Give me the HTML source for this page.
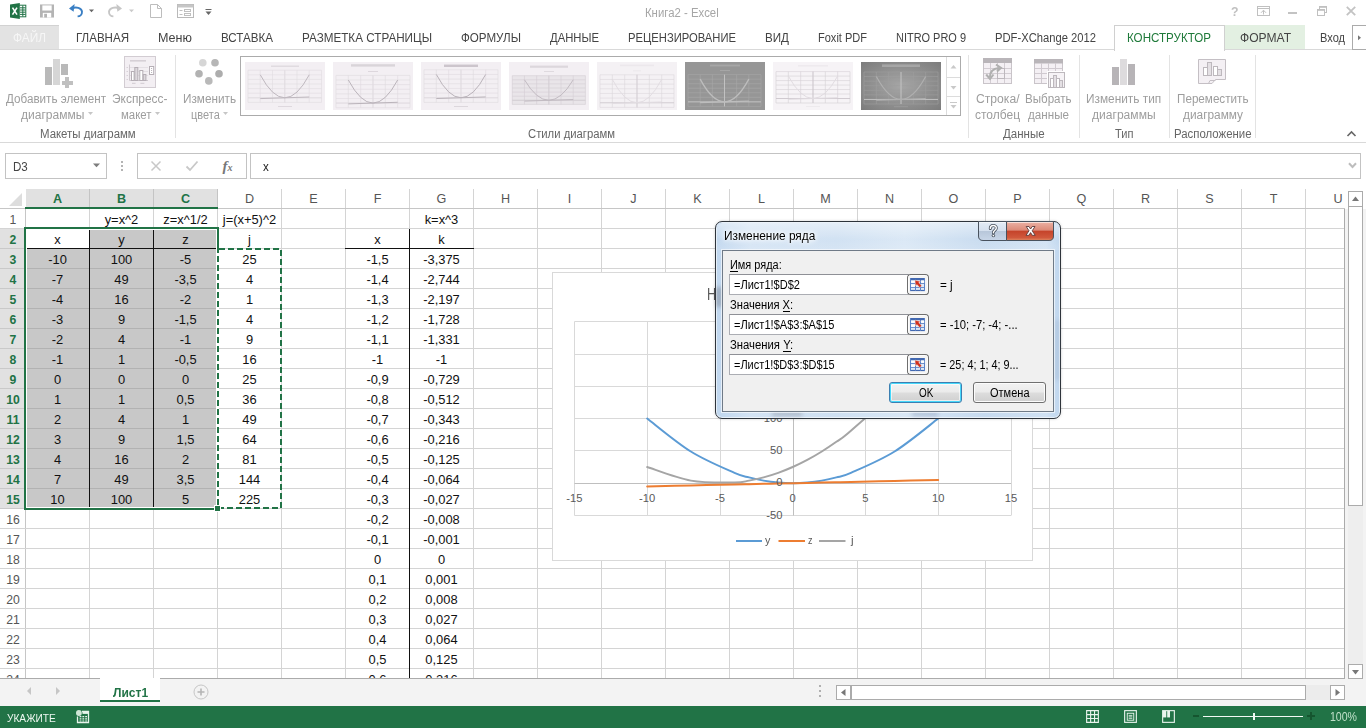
<!DOCTYPE html>
<html><head><meta charset="utf-8"><title>Excel</title>
<style>
html,body{margin:0;padding:0;}
body{width:1366px;height:728px;overflow:hidden;position:relative;background:#fff;font-family:"Liberation Sans",sans-serif;}
.t{position:absolute;white-space:nowrap;transform-origin:0 50%;}
.r{position:absolute;}
svg{position:absolute;overflow:visible;}
</style></head><body>
<div class="r" style="left:0px;top:188px;width:1366px;height:518px;background:#fff;"></div>
<div class="r" style="left:26px;top:189px;width:192px;height:19px;background:#e1e1e1;"></div>
<span class="t" style="left:52.95px;top:190.83px;font-size:12.60px;line-height:16px;color:#217346;font-weight:bold;">A</span>
<span class="t" style="left:116.95px;top:190.83px;font-size:12.60px;line-height:16px;color:#217346;font-weight:bold;">B</span>
<span class="t" style="left:180.95px;top:190.83px;font-size:12.60px;line-height:16px;color:#217346;font-weight:bold;">C</span>
<span class="t" style="left:244.95px;top:190.83px;font-size:12.60px;line-height:16px;color:#555;">D</span>
<span class="t" style="left:309.30px;top:190.83px;font-size:12.60px;line-height:16px;color:#555;">E</span>
<span class="t" style="left:373.65px;top:190.83px;font-size:12.60px;line-height:16px;color:#555;">F</span>
<span class="t" style="left:436.60px;top:190.83px;font-size:12.60px;line-height:16px;color:#555;">G</span>
<span class="t" style="left:500.95px;top:190.83px;font-size:12.60px;line-height:16px;color:#555;">H</span>
<span class="t" style="left:567.75px;top:190.83px;font-size:12.60px;line-height:16px;color:#555;">I</span>
<span class="t" style="left:630.35px;top:190.83px;font-size:12.60px;line-height:16px;color:#555;">J</span>
<span class="t" style="left:693.30px;top:190.83px;font-size:12.60px;line-height:16px;color:#555;">K</span>
<span class="t" style="left:758.00px;top:190.83px;font-size:12.60px;line-height:16px;color:#555;">L</span>
<span class="t" style="left:820.25px;top:190.83px;font-size:12.60px;line-height:16px;color:#555;">M</span>
<span class="t" style="left:884.95px;top:190.83px;font-size:12.60px;line-height:16px;color:#555;">N</span>
<span class="t" style="left:948.60px;top:190.83px;font-size:12.60px;line-height:16px;color:#555;">O</span>
<span class="t" style="left:1013.30px;top:190.83px;font-size:12.60px;line-height:16px;color:#555;">P</span>
<span class="t" style="left:1076.60px;top:190.83px;font-size:12.60px;line-height:16px;color:#555;">Q</span>
<span class="t" style="left:1140.95px;top:190.83px;font-size:12.60px;line-height:16px;color:#555;">R</span>
<span class="t" style="left:1205.30px;top:190.83px;font-size:12.60px;line-height:16px;color:#555;">S</span>
<span class="t" style="left:1269.65px;top:190.83px;font-size:12.60px;line-height:16px;color:#555;">T</span>
<span class="t" style="left:1333.45px;top:190.83px;font-size:12.60px;line-height:16px;color:#555;">U</span>
<div class="r" style="left:89px;top:189px;width:1px;height:19px;background:#c4c4c4;"></div>
<div class="r" style="left:153px;top:189px;width:1px;height:19px;background:#c4c4c4;"></div>
<div class="r" style="left:217px;top:189px;width:1px;height:19px;background:#c4c4c4;"></div>
<div class="r" style="left:281px;top:189px;width:1px;height:19px;background:#d4d4d4;"></div>
<div class="r" style="left:345px;top:189px;width:1px;height:19px;background:#d4d4d4;"></div>
<div class="r" style="left:409px;top:189px;width:1px;height:19px;background:#d4d4d4;"></div>
<div class="r" style="left:473px;top:189px;width:1px;height:19px;background:#d4d4d4;"></div>
<div class="r" style="left:537px;top:189px;width:1px;height:19px;background:#d4d4d4;"></div>
<div class="r" style="left:601px;top:189px;width:1px;height:19px;background:#d4d4d4;"></div>
<div class="r" style="left:665px;top:189px;width:1px;height:19px;background:#d4d4d4;"></div>
<div class="r" style="left:729px;top:189px;width:1px;height:19px;background:#d4d4d4;"></div>
<div class="r" style="left:793px;top:189px;width:1px;height:19px;background:#d4d4d4;"></div>
<div class="r" style="left:857px;top:189px;width:1px;height:19px;background:#d4d4d4;"></div>
<div class="r" style="left:921px;top:189px;width:1px;height:19px;background:#d4d4d4;"></div>
<div class="r" style="left:985px;top:189px;width:1px;height:19px;background:#d4d4d4;"></div>
<div class="r" style="left:1049px;top:189px;width:1px;height:19px;background:#d4d4d4;"></div>
<div class="r" style="left:1113px;top:189px;width:1px;height:19px;background:#d4d4d4;"></div>
<div class="r" style="left:1177px;top:189px;width:1px;height:19px;background:#d4d4d4;"></div>
<div class="r" style="left:1241px;top:189px;width:1px;height:19px;background:#d4d4d4;"></div>
<div class="r" style="left:1305px;top:189px;width:1px;height:19px;background:#d4d4d4;"></div>
<div class="r" style="left:0px;top:208px;width:1345px;height:1px;background:#c6c6c6;"></div>
<div class="r" style="left:25px;top:207px;width:193px;height:2px;background:#217346;"></div>
<svg style="left:0;top:188px" width="25" height="21"><path d="M22 5 L22 18 L9 18 Z" fill="#dddddd"/></svg>
<div class="r" style="left:0px;top:229px;width:25px;height:280px;background:#e1e1e1;"></div>
<span class="t" style="left:9.61px;top:211.97px;font-size:12.20px;line-height:16px;color:#555;">1</span>
<div class="r" style="left:0px;top:228px;width:25px;height:1px;background:#d4d4d4;"></div>
<span class="t" style="left:9.61px;top:231.97px;font-size:12.20px;line-height:16px;color:#217346;font-weight:bold;">2</span>
<div class="r" style="left:0px;top:248px;width:25px;height:1px;background:#c9c9c9;"></div>
<span class="t" style="left:9.61px;top:251.97px;font-size:12.20px;line-height:16px;color:#217346;font-weight:bold;">3</span>
<div class="r" style="left:0px;top:268px;width:25px;height:1px;background:#c9c9c9;"></div>
<span class="t" style="left:9.61px;top:271.97px;font-size:12.20px;line-height:16px;color:#217346;font-weight:bold;">4</span>
<div class="r" style="left:0px;top:288px;width:25px;height:1px;background:#c9c9c9;"></div>
<span class="t" style="left:9.61px;top:291.97px;font-size:12.20px;line-height:16px;color:#217346;font-weight:bold;">5</span>
<div class="r" style="left:0px;top:308px;width:25px;height:1px;background:#c9c9c9;"></div>
<span class="t" style="left:9.61px;top:311.97px;font-size:12.20px;line-height:16px;color:#217346;font-weight:bold;">6</span>
<div class="r" style="left:0px;top:328px;width:25px;height:1px;background:#c9c9c9;"></div>
<span class="t" style="left:9.61px;top:331.97px;font-size:12.20px;line-height:16px;color:#217346;font-weight:bold;">7</span>
<div class="r" style="left:0px;top:348px;width:25px;height:1px;background:#c9c9c9;"></div>
<span class="t" style="left:9.61px;top:351.97px;font-size:12.20px;line-height:16px;color:#217346;font-weight:bold;">8</span>
<div class="r" style="left:0px;top:368px;width:25px;height:1px;background:#c9c9c9;"></div>
<span class="t" style="left:9.61px;top:371.97px;font-size:12.20px;line-height:16px;color:#217346;font-weight:bold;">9</span>
<div class="r" style="left:0px;top:388px;width:25px;height:1px;background:#c9c9c9;"></div>
<span class="t" style="left:6.21px;top:391.97px;font-size:12.20px;line-height:16px;color:#217346;font-weight:bold;">10</span>
<div class="r" style="left:0px;top:408px;width:25px;height:1px;background:#c9c9c9;"></div>
<span class="t" style="left:6.55px;top:411.97px;font-size:12.20px;line-height:16px;color:#217346;font-weight:bold;">11</span>
<div class="r" style="left:0px;top:428px;width:25px;height:1px;background:#c9c9c9;"></div>
<span class="t" style="left:6.21px;top:431.97px;font-size:12.20px;line-height:16px;color:#217346;font-weight:bold;">12</span>
<div class="r" style="left:0px;top:448px;width:25px;height:1px;background:#c9c9c9;"></div>
<span class="t" style="left:6.21px;top:451.97px;font-size:12.20px;line-height:16px;color:#217346;font-weight:bold;">13</span>
<div class="r" style="left:0px;top:468px;width:25px;height:1px;background:#c9c9c9;"></div>
<span class="t" style="left:6.21px;top:471.97px;font-size:12.20px;line-height:16px;color:#217346;font-weight:bold;">14</span>
<div class="r" style="left:0px;top:488px;width:25px;height:1px;background:#c9c9c9;"></div>
<span class="t" style="left:6.21px;top:491.97px;font-size:12.20px;line-height:16px;color:#217346;font-weight:bold;">15</span>
<div class="r" style="left:0px;top:508px;width:25px;height:1px;background:#c9c9c9;"></div>
<span class="t" style="left:6.21px;top:511.97px;font-size:12.20px;line-height:16px;color:#555;">16</span>
<div class="r" style="left:0px;top:528px;width:25px;height:1px;background:#d4d4d4;"></div>
<span class="t" style="left:6.21px;top:531.97px;font-size:12.20px;line-height:16px;color:#555;">17</span>
<div class="r" style="left:0px;top:548px;width:25px;height:1px;background:#d4d4d4;"></div>
<span class="t" style="left:6.21px;top:551.97px;font-size:12.20px;line-height:16px;color:#555;">18</span>
<div class="r" style="left:0px;top:568px;width:25px;height:1px;background:#d4d4d4;"></div>
<span class="t" style="left:6.21px;top:571.97px;font-size:12.20px;line-height:16px;color:#555;">19</span>
<div class="r" style="left:0px;top:588px;width:25px;height:1px;background:#d4d4d4;"></div>
<span class="t" style="left:6.21px;top:591.97px;font-size:12.20px;line-height:16px;color:#555;">20</span>
<div class="r" style="left:0px;top:608px;width:25px;height:1px;background:#d4d4d4;"></div>
<span class="t" style="left:6.21px;top:611.97px;font-size:12.20px;line-height:16px;color:#555;">21</span>
<div class="r" style="left:0px;top:628px;width:25px;height:1px;background:#d4d4d4;"></div>
<span class="t" style="left:6.21px;top:631.97px;font-size:12.20px;line-height:16px;color:#555;">22</span>
<div class="r" style="left:0px;top:648px;width:25px;height:1px;background:#d4d4d4;"></div>
<span class="t" style="left:6.21px;top:651.97px;font-size:12.20px;line-height:16px;color:#555;">23</span>
<div class="r" style="left:0px;top:668px;width:25px;height:1px;background:#d4d4d4;"></div>
<span class="t" style="left:6.21px;top:671.97px;font-size:12.20px;line-height:16px;color:#555;">24</span>
<div class="r" style="left:0px;top:688px;width:25px;height:1px;background:#d4d4d4;"></div>
<div class="r" style="left:25px;top:209px;width:1px;height:470px;background:#c6c6c6;"></div>
<div class="r" style="left:89px;top:209px;width:1px;height:470px;background:#d4d4d4;"></div>
<div class="r" style="left:153px;top:209px;width:1px;height:470px;background:#d4d4d4;"></div>
<div class="r" style="left:217px;top:209px;width:1px;height:470px;background:#d4d4d4;"></div>
<div class="r" style="left:281px;top:209px;width:1px;height:470px;background:#d4d4d4;"></div>
<div class="r" style="left:345px;top:209px;width:1px;height:470px;background:#d4d4d4;"></div>
<div class="r" style="left:409px;top:209px;width:1px;height:470px;background:#d4d4d4;"></div>
<div class="r" style="left:473px;top:209px;width:1px;height:470px;background:#d4d4d4;"></div>
<div class="r" style="left:537px;top:209px;width:1px;height:470px;background:#d4d4d4;"></div>
<div class="r" style="left:601px;top:209px;width:1px;height:470px;background:#d4d4d4;"></div>
<div class="r" style="left:665px;top:209px;width:1px;height:470px;background:#d4d4d4;"></div>
<div class="r" style="left:729px;top:209px;width:1px;height:470px;background:#d4d4d4;"></div>
<div class="r" style="left:793px;top:209px;width:1px;height:470px;background:#d4d4d4;"></div>
<div class="r" style="left:857px;top:209px;width:1px;height:470px;background:#d4d4d4;"></div>
<div class="r" style="left:921px;top:209px;width:1px;height:470px;background:#d4d4d4;"></div>
<div class="r" style="left:985px;top:209px;width:1px;height:470px;background:#d4d4d4;"></div>
<div class="r" style="left:1049px;top:209px;width:1px;height:470px;background:#d4d4d4;"></div>
<div class="r" style="left:1113px;top:209px;width:1px;height:470px;background:#d4d4d4;"></div>
<div class="r" style="left:1177px;top:209px;width:1px;height:470px;background:#d4d4d4;"></div>
<div class="r" style="left:1241px;top:209px;width:1px;height:470px;background:#d4d4d4;"></div>
<div class="r" style="left:1305px;top:209px;width:1px;height:470px;background:#d4d4d4;"></div>
<div class="r" style="left:25px;top:228px;width:1320px;height:1px;background:#d4d4d4;"></div>
<div class="r" style="left:25px;top:248px;width:1320px;height:1px;background:#d4d4d4;"></div>
<div class="r" style="left:25px;top:268px;width:1320px;height:1px;background:#d4d4d4;"></div>
<div class="r" style="left:25px;top:288px;width:1320px;height:1px;background:#d4d4d4;"></div>
<div class="r" style="left:25px;top:308px;width:1320px;height:1px;background:#d4d4d4;"></div>
<div class="r" style="left:25px;top:328px;width:1320px;height:1px;background:#d4d4d4;"></div>
<div class="r" style="left:25px;top:348px;width:1320px;height:1px;background:#d4d4d4;"></div>
<div class="r" style="left:25px;top:368px;width:1320px;height:1px;background:#d4d4d4;"></div>
<div class="r" style="left:25px;top:388px;width:1320px;height:1px;background:#d4d4d4;"></div>
<div class="r" style="left:25px;top:408px;width:1320px;height:1px;background:#d4d4d4;"></div>
<div class="r" style="left:25px;top:428px;width:1320px;height:1px;background:#d4d4d4;"></div>
<div class="r" style="left:25px;top:448px;width:1320px;height:1px;background:#d4d4d4;"></div>
<div class="r" style="left:25px;top:468px;width:1320px;height:1px;background:#d4d4d4;"></div>
<div class="r" style="left:25px;top:488px;width:1320px;height:1px;background:#d4d4d4;"></div>
<div class="r" style="left:25px;top:508px;width:1320px;height:1px;background:#d4d4d4;"></div>
<div class="r" style="left:25px;top:528px;width:1320px;height:1px;background:#d4d4d4;"></div>
<div class="r" style="left:25px;top:548px;width:1320px;height:1px;background:#d4d4d4;"></div>
<div class="r" style="left:25px;top:568px;width:1320px;height:1px;background:#d4d4d4;"></div>
<div class="r" style="left:25px;top:588px;width:1320px;height:1px;background:#d4d4d4;"></div>
<div class="r" style="left:25px;top:608px;width:1320px;height:1px;background:#d4d4d4;"></div>
<div class="r" style="left:25px;top:628px;width:1320px;height:1px;background:#d4d4d4;"></div>
<div class="r" style="left:25px;top:648px;width:1320px;height:1px;background:#d4d4d4;"></div>
<div class="r" style="left:25px;top:668px;width:1320px;height:1px;background:#d4d4d4;"></div>
<div class="r" style="left:25px;top:249px;width:192px;height:259px;background:#c8c8c8;"></div>
<div class="r" style="left:90px;top:229px;width:127px;height:20px;background:#c8c8c8;"></div>
<div class="r" style="left:25px;top:248px;width:192px;height:1px;background:#b2b2b2;"></div>
<div class="r" style="left:25px;top:268px;width:192px;height:1px;background:#b2b2b2;"></div>
<div class="r" style="left:25px;top:288px;width:192px;height:1px;background:#b2b2b2;"></div>
<div class="r" style="left:25px;top:308px;width:192px;height:1px;background:#b2b2b2;"></div>
<div class="r" style="left:25px;top:328px;width:192px;height:1px;background:#b2b2b2;"></div>
<div class="r" style="left:25px;top:348px;width:192px;height:1px;background:#b2b2b2;"></div>
<div class="r" style="left:25px;top:368px;width:192px;height:1px;background:#b2b2b2;"></div>
<div class="r" style="left:25px;top:388px;width:192px;height:1px;background:#b2b2b2;"></div>
<div class="r" style="left:25px;top:408px;width:192px;height:1px;background:#b2b2b2;"></div>
<div class="r" style="left:25px;top:428px;width:192px;height:1px;background:#b2b2b2;"></div>
<div class="r" style="left:25px;top:448px;width:192px;height:1px;background:#b2b2b2;"></div>
<div class="r" style="left:25px;top:468px;width:192px;height:1px;background:#b2b2b2;"></div>
<div class="r" style="left:25px;top:488px;width:192px;height:1px;background:#b2b2b2;"></div>
<div class="r" style="left:89px;top:229px;width:1px;height:280px;background:#111;"></div>
<div class="r" style="left:153px;top:229px;width:1px;height:280px;background:#111;"></div>
<div class="r" style="left:25px;top:248px;width:192px;height:1px;background:#111;"></div>
<div class="r" style="left:345px;top:248px;width:129px;height:1px;background:#111;"></div>
<div class="r" style="left:409px;top:229px;width:1px;height:450px;background:#111;"></div>
<div class="r" style="left:24px;top:227px;width:191px;height:279px;border:2px solid #217346;box-sizing:content-box;box-shadow:inset 0 0 0 1px #fff"></div>
<svg style="left:0;top:0" width="1366" height="728"><path d="M218 250V507" stroke="#fff" stroke-width="2"/><path d="M219 249 H281 V508 H218 V250" fill="none" stroke="#217346" stroke-width="2" stroke-dasharray="6 3"/></svg>
<div class="r" style="left:214px;top:505px;width:7px;height:7px;background:#fff;"></div>
<div class="r" style="left:215px;top:506px;width:5px;height:5px;background:#217346;"></div>
<span class="t" style="left:104.67px;top:210.83px;font-size:12.90px;line-height:17px;color:#111;">y=x^2</span>
<span class="t" style="left:163.29px;top:210.83px;font-size:12.90px;line-height:17px;color:#111;">z=x^1/2</span>
<span class="t" style="left:222.81px;top:210.83px;font-size:12.90px;line-height:17px;color:#111;">j=(x+5)^2</span>
<span class="t" style="left:424.67px;top:210.83px;font-size:12.90px;line-height:17px;color:#111;">k=x^3</span>
<span class="t" style="left:54.27px;top:230.83px;font-size:12.90px;line-height:17px;color:#111;">x</span>
<span class="t" style="left:118.28px;top:230.83px;font-size:12.90px;line-height:17px;color:#111;">y</span>
<span class="t" style="left:182.28px;top:230.83px;font-size:12.90px;line-height:17px;color:#111;">z</span>
<span class="t" style="left:248.07px;top:230.83px;font-size:12.90px;line-height:17px;color:#111;">j</span>
<span class="t" style="left:374.27px;top:230.83px;font-size:12.90px;line-height:17px;color:#111;">x</span>
<span class="t" style="left:438.27px;top:230.83px;font-size:12.90px;line-height:17px;color:#111;">k</span>
<span class="t" style="left:48.18px;top:250.83px;font-size:12.90px;line-height:17px;color:#111;">-10</span>
<span class="t" style="left:110.74px;top:250.83px;font-size:12.90px;line-height:17px;color:#111;">100</span>
<span class="t" style="left:179.76px;top:250.83px;font-size:12.90px;line-height:17px;color:#111;">-5</span>
<span class="t" style="left:242.33px;top:250.83px;font-size:12.90px;line-height:17px;color:#111;">25</span>
<span class="t" style="left:51.76px;top:270.83px;font-size:12.90px;line-height:17px;color:#111;">-7</span>
<span class="t" style="left:114.33px;top:270.83px;font-size:12.90px;line-height:17px;color:#111;">49</span>
<span class="t" style="left:174.39px;top:270.83px;font-size:12.90px;line-height:17px;color:#111;">-3,5</span>
<span class="t" style="left:245.91px;top:270.83px;font-size:12.90px;line-height:17px;color:#111;">4</span>
<span class="t" style="left:51.76px;top:290.83px;font-size:12.90px;line-height:17px;color:#111;">-4</span>
<span class="t" style="left:114.33px;top:290.83px;font-size:12.90px;line-height:17px;color:#111;">16</span>
<span class="t" style="left:179.76px;top:290.83px;font-size:12.90px;line-height:17px;color:#111;">-2</span>
<span class="t" style="left:245.91px;top:290.83px;font-size:12.90px;line-height:17px;color:#111;">1</span>
<span class="t" style="left:51.76px;top:310.83px;font-size:12.90px;line-height:17px;color:#111;">-3</span>
<span class="t" style="left:117.91px;top:310.83px;font-size:12.90px;line-height:17px;color:#111;">9</span>
<span class="t" style="left:174.39px;top:310.83px;font-size:12.90px;line-height:17px;color:#111;">-1,5</span>
<span class="t" style="left:245.91px;top:310.83px;font-size:12.90px;line-height:17px;color:#111;">4</span>
<span class="t" style="left:51.76px;top:330.83px;font-size:12.90px;line-height:17px;color:#111;">-2</span>
<span class="t" style="left:117.91px;top:330.83px;font-size:12.90px;line-height:17px;color:#111;">4</span>
<span class="t" style="left:179.76px;top:330.83px;font-size:12.90px;line-height:17px;color:#111;">-1</span>
<span class="t" style="left:245.91px;top:330.83px;font-size:12.90px;line-height:17px;color:#111;">9</span>
<span class="t" style="left:51.76px;top:350.83px;font-size:12.90px;line-height:17px;color:#111;">-1</span>
<span class="t" style="left:117.91px;top:350.83px;font-size:12.90px;line-height:17px;color:#111;">1</span>
<span class="t" style="left:174.39px;top:350.83px;font-size:12.90px;line-height:17px;color:#111;">-0,5</span>
<span class="t" style="left:242.33px;top:350.83px;font-size:12.90px;line-height:17px;color:#111;">16</span>
<span class="t" style="left:53.91px;top:370.83px;font-size:12.90px;line-height:17px;color:#111;">0</span>
<span class="t" style="left:117.91px;top:370.83px;font-size:12.90px;line-height:17px;color:#111;">0</span>
<span class="t" style="left:181.91px;top:370.83px;font-size:12.90px;line-height:17px;color:#111;">0</span>
<span class="t" style="left:242.33px;top:370.83px;font-size:12.90px;line-height:17px;color:#111;">25</span>
<span class="t" style="left:53.91px;top:390.83px;font-size:12.90px;line-height:17px;color:#111;">1</span>
<span class="t" style="left:117.91px;top:390.83px;font-size:12.90px;line-height:17px;color:#111;">1</span>
<span class="t" style="left:176.53px;top:390.83px;font-size:12.90px;line-height:17px;color:#111;">0,5</span>
<span class="t" style="left:242.33px;top:390.83px;font-size:12.90px;line-height:17px;color:#111;">36</span>
<span class="t" style="left:53.91px;top:410.83px;font-size:12.90px;line-height:17px;color:#111;">2</span>
<span class="t" style="left:117.91px;top:410.83px;font-size:12.90px;line-height:17px;color:#111;">4</span>
<span class="t" style="left:181.91px;top:410.83px;font-size:12.90px;line-height:17px;color:#111;">1</span>
<span class="t" style="left:242.33px;top:410.83px;font-size:12.90px;line-height:17px;color:#111;">49</span>
<span class="t" style="left:53.91px;top:430.83px;font-size:12.90px;line-height:17px;color:#111;">3</span>
<span class="t" style="left:117.91px;top:430.83px;font-size:12.90px;line-height:17px;color:#111;">9</span>
<span class="t" style="left:176.53px;top:430.83px;font-size:12.90px;line-height:17px;color:#111;">1,5</span>
<span class="t" style="left:242.33px;top:430.83px;font-size:12.90px;line-height:17px;color:#111;">64</span>
<span class="t" style="left:53.91px;top:450.83px;font-size:12.90px;line-height:17px;color:#111;">4</span>
<span class="t" style="left:114.33px;top:450.83px;font-size:12.90px;line-height:17px;color:#111;">16</span>
<span class="t" style="left:181.91px;top:450.83px;font-size:12.90px;line-height:17px;color:#111;">2</span>
<span class="t" style="left:242.33px;top:450.83px;font-size:12.90px;line-height:17px;color:#111;">81</span>
<span class="t" style="left:53.91px;top:470.83px;font-size:12.90px;line-height:17px;color:#111;">7</span>
<span class="t" style="left:114.33px;top:470.83px;font-size:12.90px;line-height:17px;color:#111;">49</span>
<span class="t" style="left:176.53px;top:470.83px;font-size:12.90px;line-height:17px;color:#111;">3,5</span>
<span class="t" style="left:238.74px;top:470.83px;font-size:12.90px;line-height:17px;color:#111;">144</span>
<span class="t" style="left:50.33px;top:490.83px;font-size:12.90px;line-height:17px;color:#111;">10</span>
<span class="t" style="left:110.74px;top:490.83px;font-size:12.90px;line-height:17px;color:#111;">100</span>
<span class="t" style="left:181.91px;top:490.83px;font-size:12.90px;line-height:17px;color:#111;">5</span>
<span class="t" style="left:238.74px;top:490.83px;font-size:12.90px;line-height:17px;color:#111;">225</span>
<span class="t" style="left:366.39px;top:250.83px;font-size:12.90px;line-height:17px;color:#111;">-1,5</span>
<span class="t" style="left:423.21px;top:250.83px;font-size:12.90px;line-height:17px;color:#111;">-3,375</span>
<span class="t" style="left:366.39px;top:270.83px;font-size:12.90px;line-height:17px;color:#111;">-1,4</span>
<span class="t" style="left:423.21px;top:270.83px;font-size:12.90px;line-height:17px;color:#111;">-2,744</span>
<span class="t" style="left:366.39px;top:290.83px;font-size:12.90px;line-height:17px;color:#111;">-1,3</span>
<span class="t" style="left:423.21px;top:290.83px;font-size:12.90px;line-height:17px;color:#111;">-2,197</span>
<span class="t" style="left:366.39px;top:310.83px;font-size:12.90px;line-height:17px;color:#111;">-1,2</span>
<span class="t" style="left:423.21px;top:310.83px;font-size:12.90px;line-height:17px;color:#111;">-1,728</span>
<span class="t" style="left:366.39px;top:330.83px;font-size:12.90px;line-height:17px;color:#111;">-1,1</span>
<span class="t" style="left:423.21px;top:330.83px;font-size:12.90px;line-height:17px;color:#111;">-1,331</span>
<span class="t" style="left:371.76px;top:350.83px;font-size:12.90px;line-height:17px;color:#111;">-1</span>
<span class="t" style="left:435.76px;top:350.83px;font-size:12.90px;line-height:17px;color:#111;">-1</span>
<span class="t" style="left:366.39px;top:370.83px;font-size:12.90px;line-height:17px;color:#111;">-0,9</span>
<span class="t" style="left:423.21px;top:370.83px;font-size:12.90px;line-height:17px;color:#111;">-0,729</span>
<span class="t" style="left:366.39px;top:390.83px;font-size:12.90px;line-height:17px;color:#111;">-0,8</span>
<span class="t" style="left:423.21px;top:390.83px;font-size:12.90px;line-height:17px;color:#111;">-0,512</span>
<span class="t" style="left:366.39px;top:410.83px;font-size:12.90px;line-height:17px;color:#111;">-0,7</span>
<span class="t" style="left:423.21px;top:410.83px;font-size:12.90px;line-height:17px;color:#111;">-0,343</span>
<span class="t" style="left:366.39px;top:430.83px;font-size:12.90px;line-height:17px;color:#111;">-0,6</span>
<span class="t" style="left:423.21px;top:430.83px;font-size:12.90px;line-height:17px;color:#111;">-0,216</span>
<span class="t" style="left:366.39px;top:450.83px;font-size:12.90px;line-height:17px;color:#111;">-0,5</span>
<span class="t" style="left:423.21px;top:450.83px;font-size:12.90px;line-height:17px;color:#111;">-0,125</span>
<span class="t" style="left:366.39px;top:470.83px;font-size:12.90px;line-height:17px;color:#111;">-0,4</span>
<span class="t" style="left:423.21px;top:470.83px;font-size:12.90px;line-height:17px;color:#111;">-0,064</span>
<span class="t" style="left:366.39px;top:490.83px;font-size:12.90px;line-height:17px;color:#111;">-0,3</span>
<span class="t" style="left:423.21px;top:490.83px;font-size:12.90px;line-height:17px;color:#111;">-0,027</span>
<span class="t" style="left:366.39px;top:510.83px;font-size:12.90px;line-height:17px;color:#111;">-0,2</span>
<span class="t" style="left:423.21px;top:510.83px;font-size:12.90px;line-height:17px;color:#111;">-0,008</span>
<span class="t" style="left:366.39px;top:530.83px;font-size:12.90px;line-height:17px;color:#111;">-0,1</span>
<span class="t" style="left:423.21px;top:530.83px;font-size:12.90px;line-height:17px;color:#111;">-0,001</span>
<span class="t" style="left:373.91px;top:550.83px;font-size:12.90px;line-height:17px;color:#111;">0</span>
<span class="t" style="left:437.91px;top:550.83px;font-size:12.90px;line-height:17px;color:#111;">0</span>
<span class="t" style="left:368.53px;top:570.83px;font-size:12.90px;line-height:17px;color:#111;">0,1</span>
<span class="t" style="left:425.36px;top:570.83px;font-size:12.90px;line-height:17px;color:#111;">0,001</span>
<span class="t" style="left:368.53px;top:590.83px;font-size:12.90px;line-height:17px;color:#111;">0,2</span>
<span class="t" style="left:425.36px;top:590.83px;font-size:12.90px;line-height:17px;color:#111;">0,008</span>
<span class="t" style="left:368.53px;top:610.83px;font-size:12.90px;line-height:17px;color:#111;">0,3</span>
<span class="t" style="left:425.36px;top:610.83px;font-size:12.90px;line-height:17px;color:#111;">0,027</span>
<span class="t" style="left:368.53px;top:630.83px;font-size:12.90px;line-height:17px;color:#111;">0,4</span>
<span class="t" style="left:425.36px;top:630.83px;font-size:12.90px;line-height:17px;color:#111;">0,064</span>
<span class="t" style="left:368.53px;top:650.83px;font-size:12.90px;line-height:17px;color:#111;">0,5</span>
<span class="t" style="left:425.36px;top:650.83px;font-size:12.90px;line-height:17px;color:#111;">0,125</span>
<span class="t" style="left:368.53px;top:670.83px;font-size:12.90px;line-height:17px;color:#111;">0,6</span>
<span class="t" style="left:425.36px;top:670.83px;font-size:12.90px;line-height:17px;color:#111;">0,216</span>
<div class="r" style="left:1345px;top:209px;width:21px;height:497px;background:#f3f3f3;"></div>
<div class="r" style="left:1344px;top:209px;width:1px;height:470px;background:#ababab;"></div>
<div class="r" style="left:1348px;top:191px;width:15px;height:488px;background:#eeeeee;"></div>
<div class="r" style="left:1348px;top:191px;width:13px;height:14px;border:1px solid #ababab;background:#fff"></div>
<svg style="left:1348px;top:191px" width="15" height="16"><path d="M4 10 L7.5 5.5 L11 10 Z" fill="#777"/></svg>
<div class="r" style="left:1348px;top:206px;width:15px;height:300px;background:#fff;border:1px solid #ababab;box-sizing:border-box;"></div>
<div class="r" style="left:1348px;top:664px;width:13px;height:13px;border:1px solid #ababab;background:#fff"></div>
<svg style="left:1348px;top:664px" width="15" height="15"><path d="M4 6 L11 6 L7.5 10.5 Z" fill="#777"/></svg>
<div class="r" style="left:0px;top:679px;width:1366px;height:27px;background:#f3f3f3;"></div>
<div class="r" style="left:0px;top:678px;width:1345px;height:1px;background:#ababab;"></div>
<div class="r" style="left:100px;top:678px;width:60px;height:23px;background:#fff;"></div>
<div class="r" style="left:100px;top:700px;width:60px;height:2px;background:#217346;"></div>
<span class="t" style="left:112.50px;top:683.60px;font-size:13.00px;line-height:17px;color:#217346;transform:scaleX(0.9251);font-weight:bold;">Лист1</span>
<svg style="left:20px;top:685px" width="40" height="14"><path d="M11 2 L11 10 L7 6 Z" fill="#c6c6c6"/><path d="M36 2 L36 10 L40 6 Z" fill="#c6c6c6"/></svg>
<svg style="left:193px;top:683.5px" width="16" height="16"><circle cx="8" cy="8" r="7" fill="none" stroke="#c6c6c6" stroke-width="1"/><path d="M4.5 8 H11.5 M8 4.5 V11.5" stroke="#b5b5b5" stroke-width="1.6"/></svg>
<div class="r" style="left:819px;top:685px;width:2px;height:2px;background:#b0b0b0;"></div>
<div class="r" style="left:819px;top:690px;width:2px;height:2px;background:#b0b0b0;"></div>
<div class="r" style="left:819px;top:695px;width:2px;height:2px;background:#b0b0b0;"></div>
<div class="r" style="left:836px;top:685px;width:13px;height:13px;border:1px solid #ababab;background:#fff"></div>
<svg style="left:836px;top:685px" width="15" height="15"><path d="M9.5 4 L9.5 11 L5 7.5 Z" fill="#777"/></svg>
<div class="r" style="left:851px;top:685px;width:453px;height:13px;border:1px solid #ababab;background:#fff"></div>
<div class="r" style="left:1306px;top:685px;width:24px;height:15px;background:#ececec;"></div>
<div class="r" style="left:1330px;top:685px;width:13px;height:13px;border:1px solid #ababab;background:#fff"></div>
<svg style="left:1330px;top:685px" width="15" height="15"><path d="M5.5 4 L5.5 11 L10 7.5 Z" fill="#777"/></svg>
<div class="r" style="left:0px;top:706px;width:1366px;height:22px;background:#217346;"></div>
<span class="t" style="left:7.00px;top:709.58px;font-size:11.60px;line-height:15px;color:#eef8f1;transform:scaleX(0.8756);">УКАЖИТЕ</span>
<div class="r" style="left:0px;top:0px;width:1366px;height:188px;background:#fff;"></div>
<svg style="left:10px;top:3px" width="17" height="16" viewBox="0 0 17 16">
<rect x="8.5" y="2.2" width="7.3" height="11.6" fill="#fff" stroke="#217346" stroke-width="1"/>
<path d="M10 4.8h5.5M10 7h5.5M10 9.2h5.5M10 11.4h5.5M12.8 2.5v11" stroke="#217346" stroke-width="1" />
<path d="M0 1.6 L9.8 0 V16 L0 14.4 Z" fill="#217346"/>
<path d="M2.5 4.6 L7 11.6 M7 4.6 L2.5 11.6" stroke="#fff" stroke-width="1.6"/>
</svg>
<svg style="left:40px;top:4px" width="14" height="14" viewBox="0 0 15 14">
<path d="M0 0H15V14H0Z" fill="#b4b4b4"/><rect x="2.5" y="1" width="10" height="5.5" fill="#fff"/><rect x="3" y="9" width="9" height="5" fill="#fff"/><rect x="4.5" y="10" width="3" height="4" fill="#b4b4b4"/>
</svg>
<svg style="left:68px;top:3px" width="28" height="16" viewBox="0 0 28 16">
<path d="M4 5.2 C8 3.6 13.6 4.6 14 8.6 C14.2 11.4 12 13.2 9.6 13.4" fill="none" stroke="#3a7fc4" stroke-width="1.9"/>
<path d="M1 5.6 L6.6 1 L6.2 4.6 L5.6 8.8 Z" fill="#3a7fc4"/>
<path d="M21 6.5 h5 l-2.5 2.8z" fill="#666"/>
</svg>
<svg style="left:107px;top:3px" width="30" height="16" viewBox="0 0 30 16">
<path d="M12 5.2 C8 3.6 2.4 4.6 2 8.6 C1.8 11.4 4 13.2 6.4 13.4" fill="none" stroke="#c6c6c6" stroke-width="1.9"/>
<path d="M15 5.6 L9.4 1 L9.8 4.6 L10.4 8.8 Z" fill="#c6c6c6"/>
<path d="M22 6.5 h5 l-2.5 2.8z" fill="#cacaca"/>
</svg>
<svg style="left:150px;top:4px" width="12" height="14" viewBox="0 0 12 14">
<path d="M0.5 0.5 H7.5 L11.5 4.5 V13.5 H0.5 Z" fill="#fff" stroke="#bdbdbd"/><path d="M7.5 0.5 V4.5 H11.5" fill="none" stroke="#bdbdbd"/>
</svg>
<svg style="left:177px;top:4px" width="17" height="14" viewBox="0 0 17 14">
<rect x="0.5" y="0.5" width="16" height="13" fill="#fff" stroke="#b9b9b9"/><rect x="0.5" y="0.5" width="16" height="3" fill="#c6c6c6"/>
<rect x="7.5" y="5.5" width="6" height="2" fill="none" stroke="#c0c0c0"/><rect x="7.5" y="9.5" width="6" height="2" fill="none" stroke="#c0c0c0"/>
<path d="M2.5 6.5h3M2.5 10.5h3" stroke="#c0c0c0"/>
</svg>
<svg style="left:205px;top:8px" width="8" height="8"><path d="M0.5 1.5h6" stroke="#666" stroke-width="1"/><path d="M0.5 3.5 h6 l-3 3.5z" fill="#666"/></svg>
<span class="t" style="left:644.80px;top:4.94px;font-size:12.30px;line-height:16px;color:#a6a6a6;transform:scaleX(0.9243);">Книга2 - Excel</span>
<span class="t" style="left:1230.50px;top:2.52px;font-size:13.50px;line-height:18px;color:#c0c0c0;transform:scaleX(0.9095);font-weight:bold;">?</span>
<svg style="left:1257px;top:6px" width="14" height="11"><rect x="0.5" y="0.5" width="12" height="9" fill="none" stroke="#c0c0c0"/><path d="M0.5 2.5H12.5" stroke="#c0c0c0"/><path d="M6.5 8.5V4.5M4 6.8 L6.5 4.2 L9 6.8" fill="none" stroke="#c0c0c0"/></svg>
<div class="r" style="left:1288px;top:12px;width:9px;height:2px;background:#c3c3c3;"></div>
<svg style="left:1317px;top:6px" width="11" height="11"><rect x="2.5" y="0.5" width="7" height="6" fill="none" stroke="#c0c0c0"/><path d="M2.5 1H9.5" stroke="#c0c0c0" stroke-width="1.6"/><rect x="0.5" y="3.5" width="7" height="6" fill="#fff" stroke="#c0c0c0"/><path d="M0.5 4H7.5" stroke="#c0c0c0" stroke-width="1.6"/></svg>
<svg style="left:1346px;top:6px" width="10" height="10"><path d="M0.8 0.8 L9.2 9.2 M9.2 0.8 L0.8 9.2" stroke="#c3c3c3" stroke-width="1.8"/></svg>
<div class="r" style="left:0px;top:49px;width:1366px;height:1px;background:#d9d9d9;"></div>
<div class="r" style="left:0px;top:25px;width:59px;height:24px;background:#e3e3e3;"></div>
<div class="r" style="left:0px;top:25px;width:59px;height:1px;background:#d2d2d2;"></div>
<span class="t" style="left:13.00px;top:29.54px;font-size:12.00px;line-height:16px;color:#f6f6f6;transform:scaleX(0.9891);">ФАЙЛ</span>
<span class="t" style="left:76.00px;top:29.54px;font-size:12.00px;line-height:16px;color:#444;transform:scaleX(0.9629);">ГЛАВНАЯ</span>
<span class="t" style="left:158.00px;top:29.54px;font-size:12.00px;line-height:16px;color:#444;transform:scaleX(1.0483);">Меню</span>
<span class="t" style="left:221.00px;top:29.54px;font-size:12.00px;line-height:16px;color:#444;transform:scaleX(0.9664);">ВСТАВКА</span>
<span class="t" style="left:302.00px;top:29.54px;font-size:12.00px;line-height:16px;color:#444;transform:scaleX(0.9732);">РАЗМЕТКА СТРАНИЦЫ</span>
<span class="t" style="left:461.00px;top:29.54px;font-size:12.00px;line-height:16px;color:#444;transform:scaleX(0.9670);">ФОРМУЛЫ</span>
<span class="t" style="left:550.00px;top:29.54px;font-size:12.00px;line-height:16px;color:#444;transform:scaleX(0.9407);">ДАННЫЕ</span>
<span class="t" style="left:628.00px;top:29.54px;font-size:12.00px;line-height:16px;color:#444;transform:scaleX(0.9358);">РЕЦЕНЗИРОВАНИЕ</span>
<span class="t" style="left:765.00px;top:29.54px;font-size:12.00px;line-height:16px;color:#444;transform:scaleX(0.9694);">ВИД</span>
<span class="t" style="left:818.00px;top:29.54px;font-size:12.00px;line-height:16px;color:#444;transform:scaleX(0.9187);">Foxit PDF</span>
<span class="t" style="left:896.00px;top:29.54px;font-size:12.00px;line-height:16px;color:#444;transform:scaleX(0.9129);">NITRO PRO 9</span>
<span class="t" style="left:995.00px;top:29.54px;font-size:12.00px;line-height:16px;color:#444;transform:scaleX(0.9346);">PDF-XChange 2012</span>
<div class="r" style="left:1224px;top:25px;width:81px;height:24px;background:#e3f0e2;"></div>
<div class="r" style="left:1114px;top:25px;width:109px;height:25px;background:#fff;border:1px solid #d0d0d0;border-bottom:none;box-sizing:content-box"></div>
<span class="t" style="left:1127.00px;top:29.54px;font-size:12.00px;line-height:16px;color:#1f7a3a;transform:scaleX(0.9662);">КОНСТРУКТОР</span>
<span class="t" style="left:1240.00px;top:29.54px;font-size:12.00px;line-height:16px;color:#444;transform:scaleX(1.0055);">ФОРМАТ</span>
<span class="t" style="left:1320.00px;top:29.54px;font-size:12.00px;line-height:16px;color:#444;transform:scaleX(0.9209);">Вход</span>
<div class="r" style="left:1352px;top:25px;width:15px;height:25px;border:1px solid #ababab;background:#fff;box-sizing:border-box"></div>
<svg style="left:1352px;top:25px" width="14" height="25"><path d="M6 10.2 L6 15.2 L9 12.7 Z" fill="#777"/></svg>
<div class="r" style="left:0px;top:142px;width:1366px;height:1px;background:#d9d9d9;"></div>
<div class="r" style="left:175px;top:55px;width:1px;height:83px;background:#e3e3e3;"></div>
<div class="r" style="left:968px;top:55px;width:1px;height:83px;background:#e3e3e3;"></div>
<div class="r" style="left:1079px;top:55px;width:1px;height:83px;background:#e3e3e3;"></div>
<div class="r" style="left:1169px;top:55px;width:1px;height:83px;background:#e3e3e3;"></div>
<div class="r" style="left:1255px;top:55px;width:1px;height:83px;background:#e3e3e3;"></div>
<div class="r" style="left:45px;top:67px;width:7px;height:18px;background:#b9b9b9;"></div>
<div class="r" style="left:53px;top:59px;width:7px;height:26px;background:#d6d6d6;"></div>
<div class="r" style="left:61px;top:64px;width:7px;height:12px;background:#b9b9b9;"></div>
<div class="r" style="left:60px;top:75px;width:14px;height:14px;background:#fff;"></div>
<div class="r" style="left:65px;top:77px;width:4px;height:11px;background:#c0c0c0;"></div>
<div class="r" style="left:61.5px;top:80.5px;width:11px;height:4px;background:#c0c0c0;"></div>
<span class="t" style="left:6.00px;top:90.84px;font-size:12.00px;line-height:16px;color:#9d9d9d;transform:scaleX(0.9713);">Добавить элемент</span>
<span class="t" style="left:21.00px;top:106.84px;font-size:12.00px;line-height:16px;color:#9d9d9d;transform:scaleX(1.0043);">диаграммы</span>
<svg style="left:88px;top:112px" width="6" height="4"><path d="M0 0h5l-2.5 3z" fill="#c6c6c6"/></svg>
<svg style="left:124px;top:56px" width="32" height="32" viewBox="0 0 32 32">
<rect x="0.5" y="0.5" width="31" height="31" fill="#f3eff3" stroke="#d2ccd2"/>
<rect x="6" y="4" width="16" height="1.6" fill="#d6d0d6"/>
<path d="M5 11.5H24M5 15.5H24M5 19.5H24" stroke="#e0dae0" stroke-width="0.8"/>
<path d="M2.5 11.5h1.5M2.5 15.5h1.5M2.5 19.5h1.5M2.5 23.5h1.5" stroke="#d0cad0" stroke-width="0.8"/>
<path d="M5.5 8.5V24.5H24" fill="none" stroke="#cfc9cf"/>
<rect x="7.5" y="15.5" width="2.6" height="9" fill="#fff" stroke="#b5aeb5"/><rect x="10.8" y="11.5" width="3" height="13" fill="#ddd8dd" stroke="#b5aeb5"/><rect x="15.8" y="14.5" width="3" height="10" fill="#fff" stroke="#b5aeb5"/><rect x="19.3" y="18.5" width="2.6" height="6" fill="#ddd8dd" stroke="#b5aeb5"/>
<rect x="25.5" y="10.5" width="4.2" height="8" fill="#fff" stroke="#b5aeb5"/><path d="M27.6 12v1M27.6 14v1M27.6 16v1" stroke="#b5aeb5"/>
<path d="M8 27.3h3.6M16.4 27.3h4" stroke="#d0cad0"/>
</svg>
<span class="t" style="left:112.00px;top:90.84px;font-size:12.00px;line-height:16px;color:#9d9d9d;transform:scaleX(0.9937);">Экспресс-</span>
<span class="t" style="left:121.00px;top:106.84px;font-size:12.00px;line-height:16px;color:#9d9d9d;transform:scaleX(0.9507);">макет</span>
<svg style="left:155px;top:112px" width="6" height="4"><path d="M0 0h5l-2.5 3z" fill="#c6c6c6"/></svg>
<svg style="left:190px;top:55px" width="40" height="34">
<circle cx="12.8" cy="7.8" r="3.8" fill="#d6d6d6"/><circle cx="25" cy="7.8" r="3.8" fill="#b6b6b6"/><circle cx="9" cy="18.8" r="3.8" fill="#b2b2b2"/><circle cx="29" cy="18.8" r="3.8" fill="#adadad"/><circle cx="18.8" cy="25.9" r="3.8" fill="#b9b9b9"/>
</svg>
<span class="t" style="left:182.50px;top:90.84px;font-size:12.00px;line-height:16px;color:#9d9d9d;transform:scaleX(0.9791);">Изменить</span>
<span class="t" style="left:190.50px;top:106.84px;font-size:12.00px;line-height:16px;color:#9d9d9d;transform:scaleX(0.9165);">цвета</span>
<svg style="left:223px;top:112px" width="6" height="4"><path d="M0 0h5l-2.5 3z" fill="#c6c6c6"/></svg>
<span class="t" style="left:39.70px;top:126.44px;font-size:12.00px;line-height:16px;color:#666;transform:scaleX(0.9520);">Макеты диаграмм</span>
<span class="t" style="left:528.00px;top:126.44px;font-size:12.00px;line-height:16px;color:#666;transform:scaleX(0.9404);">Стили диаграмм</span>
<div class="r" style="left:240px;top:56px;width:719px;height:58px;border:1px solid #ababab;background:#fff"></div>
<div class="r" style="left:946px;top:57px;width:1px;height:58px;background:#dcdcdc;"></div>
<div class="r" style="left:947px;top:77px;width:13px;height:1px;background:#dcdcdc;"></div>
<div class="r" style="left:947px;top:96px;width:13px;height:1px;background:#dcdcdc;"></div>
<svg style="left:947px;top:57px" width="13" height="58"><path d="M3.5 11.5 L6.5 8 L9.5 11.5Z" fill="#c9c9c9"/><path d="M3.5 29 L9.5 29 L6.5 32.5Z" fill="#c9c9c9"/><path d="M3 45.5h7" stroke="#c9c9c9"/><path d="M3.5 48 L9.5 48 L6.5 51.5Z" fill="#c9c9c9"/></svg>
<svg style="left:245px;top:62px" width="80" height="48" viewBox="0 0 80 48"><rect width="80" height="48" fill="#f3eff3"/><path d="M3 8.20H76.5M3 12.80H76.5M3 17.40H76.5M3 22.00H76.5M3 26.60H76.5M3 31.20H76.5M3 35.80H76.5M3 40.40H76.5M3.00 8.2V40.4M15.25 8.2V40.4M27.50 8.2V40.4M39.75 8.2V40.4M52.00 8.2V40.4M64.25 8.2V40.4M76.50 8.2V40.4" stroke="#e0dbe0" stroke-width="0.6" fill="none"/><path d="M39.75 8.2V40.4 M3 35.80H76.5" stroke="#e0dbe0" stroke-width="0.7" fill="none"/><path d="M15.25 12.80 Q39.75 58.80 64.25 12.80" stroke="#bfb8bf" stroke-width="1" fill="none"/><path d="M15.25 36.60 L64.25 35.00" stroke="#bfb8bf" stroke-width="1" fill="none"/><rect x="26" y="3.6" width="28" height="1.2" fill="#bfb8bf" opacity="0.45"/><rect x="33" y="44.2" width="14" height="0.8" fill="#bfb8bf" opacity="0.5"/></svg>
<svg style="left:333px;top:62px" width="80" height="48" viewBox="0 0 80 48"><rect width="80" height="48" fill="#f3eff3"/><path d="M3 13.40H77M3 18.01H77M3 22.63H77M3 27.24H77M3 31.86H77M3 36.47H77M3 41.09H77M3 45.70H77M3.00 13.4V45.7M15.33 13.4V45.7M27.67 13.4V45.7M40.00 13.4V45.7M52.33 13.4V45.7M64.67 13.4V45.7M77.00 13.4V45.7" stroke="#dfdadf" stroke-width="0.6" fill="none"/><path d="M40 13.4V45.7 M3 41.09H77" stroke="#dfdadf" stroke-width="0.7" fill="none"/><path d="M15.33 18.01 Q40.00 64.16 64.67 18.01" stroke="#bbb4bb" stroke-width="1" fill="none"/><path d="M15.33 41.89 L64.67 40.29" stroke="#bbb4bb" stroke-width="1" fill="none"/><rect x="18" y="2.2" width="44" height="2.4" fill="#bbb4bb" opacity="0.45"/><rect x="35" y="9.2" width="10" height="0.8" fill="#bbb4bb" opacity="0.5"/></svg>
<svg style="left:421px;top:62px" width="80" height="48" viewBox="0 0 80 48"><rect width="80" height="48" fill="#f3eff3"/><path d="M3 7.80H77M3 12.46H77M3 17.11H77M3 21.77H77M3 26.43H77M3 31.09H77M3 35.74H77M3 40.40H77M3.00 7.8V40.4M15.33 7.8V40.4M27.67 7.8V40.4M40.00 7.8V40.4M52.33 7.8V40.4M64.67 7.8V40.4M77.00 7.8V40.4" stroke="#dfdadf" stroke-width="0.6" fill="none"/><path d="M40 7.8V40.4 M3 35.74H77" stroke="#dfdadf" stroke-width="0.7" fill="none"/><path d="M15.33 12.46 Q40.00 59.03 64.67 12.46" stroke="#bab3ba" stroke-width="1" fill="none"/><path d="M15.33 36.54 L64.67 34.94" stroke="#bab3ba" stroke-width="1" fill="none"/><rect x="23" y="2.6" width="34" height="2.4" fill="#bab3ba" opacity="0.7"/><rect x="33" y="44.2" width="14" height="0.8" fill="#bab3ba" opacity="0.5"/></svg>
<svg style="left:509px;top:62px" width="80" height="48" viewBox="0 0 80 48"><rect width="80" height="48" fill="#f3eff3"/><rect x="3.3" y="13.7" width="73.1" height="28.7" fill="#e9e5e9"/><path d="M3.3 13.70H76.4M3.3 17.80H76.4M3.3 21.90H76.4M3.3 26.00H76.4M3.3 30.10H76.4M3.3 34.20H76.4M3.3 38.30H76.4M3.3 42.40H76.4M3.30 13.7V42.4M15.48 13.7V42.4M27.67 13.7V42.4M39.85 13.7V42.4M52.03 13.7V42.4M64.22 13.7V42.4M76.40 13.7V42.4" stroke="#d3cdd3" stroke-width="0.6" fill="none"/><path d="M39.85 13.7V42.4 M3.3 38.30H76.4" stroke="#d3cdd3" stroke-width="0.7" fill="none"/><path d="M15.48 17.80 Q39.85 58.80 64.22 17.80" stroke="#c2bbc2" stroke-width="1" fill="none"/><path d="M15.48 39.10 L64.22 37.50" stroke="#c2bbc2" stroke-width="1" fill="none"/><rect x="21" y="3.6" width="38" height="2.2" fill="#c2bbc2" opacity="0.45"/><rect x="35" y="9.2" width="10" height="0.8" fill="#c2bbc2" opacity="0.5"/></svg>
<svg style="left:597px;top:62px" width="80" height="48" viewBox="0 0 80 48"><rect width="80" height="48" fill="#f4f1f4"/><path d="M3 12.80H77M3 17.46H77M3 22.11H77M3 26.77H77M3 31.43H77M3 36.09H77M3 40.74H77M3 45.40H77M3.00 12.8V45.4M15.33 12.8V45.4M27.67 12.8V45.4M40.00 12.8V45.4M52.33 12.8V45.4M64.67 12.8V45.4M77.00 12.8V45.4" stroke="#dcd7dc" stroke-width="0.6" fill="none"/><path d="M40 12.8V45.4 M3 40.74H77" stroke="#cfc9cf" stroke-width="0.7" fill="none"/><path d="M15.33 17.46 Q40.00 64.03 64.67 17.46" stroke="#e2dde2" stroke-width="1" fill="none"/><path d="M15.33 41.54 L64.67 39.94" stroke="#e2dde2" stroke-width="1" fill="none"/><rect x="23" y="2.6" width="34" height="1.6" fill="#e2dde2" opacity="0.45"/><rect x="36" y="8.4" width="8" height="0.8" fill="#e2dde2" opacity="0.5"/></svg>
<svg style="left:685px;top:62px" width="80" height="48" viewBox="0 0 80 48"><rect width="80" height="48" fill="#969696"/><path d="M3 12.60H76M3 17.14H76M3 21.69H76M3 26.23H76M3 30.77H76M3 35.31H76M3 39.86H76M3 44.40H76M3.00 12.6V44.4M15.17 12.6V44.4M27.33 12.6V44.4M39.50 12.6V44.4M51.67 12.6V44.4M63.83 12.6V44.4M76.00 12.6V44.4" stroke="#a8a8a8" stroke-width="0.6" fill="none"/><path d="M39.5 12.6V44.4 M3 39.86H76" stroke="#d0d0d0" stroke-width="0.7" fill="none"/><path d="M15.17 17.14 Q39.50 62.57 63.83 17.14" stroke="#bdbdbd" stroke-width="1.3" fill="none"/><path d="M15.17 40.66 L63.83 39.06" stroke="#bdbdbd" stroke-width="1.3" fill="none"/><rect x="25" y="2.6" width="30" height="1.8" fill="#bdbdbd" opacity="0.45"/><rect x="35" y="8.2" width="10" height="0.8" fill="#bdbdbd" opacity="0.5"/></svg>
<svg style="left:773px;top:62px" width="80" height="48" viewBox="0 0 80 48"><rect width="80" height="48" fill="#f6f3f6"/><path d="M3 9.60H77M3 14.09H77M3 18.57H77M3 23.06H77M3 27.54H77M3 32.03H77M3 36.51H77M3 41.00H77M3.00 9.6V41M15.33 9.6V41M27.67 9.6V41M40.00 9.6V41M52.33 9.6V41M64.67 9.6V41M77.00 9.6V41" stroke="#d5d0d5" stroke-width="0.6" fill="none"/><path d="M40 9.6V41 M3 36.51H77" stroke="#c8c2c8" stroke-width="0.7" fill="none"/><path d="M15.33 14.09 Q40.00 58.94 64.67 14.09" stroke="#e1dce1" stroke-width="1" fill="none"/><path d="M15.33 37.31 L64.67 35.71" stroke="#e1dce1" stroke-width="1" fill="none"/><rect x="25" y="3.2" width="30" height="1.2" fill="#e1dce1" opacity="0.45"/><rect x="33" y="44" width="14" height="0.8" fill="#e1dce1" opacity="0.5"/></svg>
<svg style="left:861px;top:62px" width="80" height="48" viewBox="0 0 80 48"><rect width="80" height="48" fill="#8a8a8a"/><defs><radialGradient id="rg8" cx="50%" cy="50%" r="70%"><stop offset="0" stop-color="#a6a6a6"/><stop offset="1" stop-color="#7c7c7c"/></radialGradient></defs><rect width="80" height="48" fill="url(#rg8)"/><path d="M3 10.00H77M3 14.57H77M3 19.14H77M3 23.71H77M3 28.29H77M3 32.86H77M3 37.43H77M3 42.00H77M3.00 10V42M15.33 10V42M27.67 10V42M40.00 10V42M52.33 10V42M64.67 10V42M77.00 10V42" stroke="#9d9d9d" stroke-width="0.6" fill="none"/><path d="M40 10V42 M3 37.43H77" stroke="#d6d6d6" stroke-width="0.7" fill="none"/><path d="M15.33 14.57 Q40.00 60.29 64.67 14.57" stroke="#b0b0b0" stroke-width="1.2" fill="none"/><path d="M15.33 38.23 L64.67 36.63" stroke="#b0b0b0" stroke-width="1.2" fill="none"/><rect x="21" y="2.4" width="38" height="2.6" fill="#b0b0b0" opacity="0.7"/><rect x="33" y="44.4" width="14" height="0.8" fill="#b0b0b0" opacity="0.5"/></svg>
<svg style="left:983px;top:58px" width="29" height="26" viewBox="0 0 29 26">
<rect x="0.5" y="0.5" width="28" height="25" fill="#f4f0f4" stroke="#c9c4c9"/>
<rect x="0" y="0" width="29" height="5" fill="#b9b5b9"/>
<path d="M7.5 5V25M14.5 5V25M21.5 5V25M1 10.5H28M1 15.5H28M1 20.5H28" stroke="#d3cdd3" fill="none"/>
<rect x="14.5" y="10.5" width="7" height="10" fill="none" stroke="#bdb8bd"/>
<path d="M7 19 C7 13 10 10.5 16 10" fill="none" stroke="#b0b0b0" stroke-width="2.2"/>
<path d="M13 6.5 L18 9.8 L14 13.5" fill="none" stroke="#b0b0b0" stroke-width="2"/>
<path d="M3.2 16.5 L7 21 L10.5 16.5" fill="none" stroke="#b0b0b0" stroke-width="2"/>
</svg>
<svg style="left:1034px;top:59px" width="32" height="30" viewBox="0 0 32 30">
<rect x="0.5" y="0.5" width="28" height="24" fill="#f4f0f4" stroke="#c9c4c9"/>
<rect x="0" y="0" width="29" height="4.5" fill="#b9b5b9"/>
<path d="M7.5 4V24M14.5 4V24M21.5 4V24M1 9.5H28M1 14.5H28M1 19.5H28" stroke="#d0cad0" fill="none"/>
<rect x="13" y="12" width="19" height="18" fill="#fff"/>
<rect x="14.5" y="13.5" width="16" height="15" fill="#f6f3f6" stroke="#bdb8bd"/>
<rect x="16.5" y="19.5" width="3" height="9" fill="#fff" stroke="#bdb8bd"/><rect x="19.5" y="16.5" width="3" height="12" fill="#e4e0e4" stroke="#bdb8bd"/><rect x="22.5" y="19.5" width="3" height="9" fill="#fff" stroke="#bdb8bd"/><rect x="25.5" y="21.5" width="3" height="7" fill="#e4e0e4" stroke="#bdb8bd"/>
</svg>
<span class="t" style="left:976.00px;top:90.84px;font-size:12.00px;line-height:16px;color:#9d9d9d;transform:scaleX(1.0109);">Строка/</span>
<span class="t" style="left:975.00px;top:106.84px;font-size:12.00px;line-height:16px;color:#9d9d9d;transform:scaleX(0.9987);">столбец</span>
<span class="t" style="left:1025.40px;top:90.84px;font-size:12.00px;line-height:16px;color:#9d9d9d;transform:scaleX(0.9641);">Выбрать</span>
<span class="t" style="left:1028.00px;top:106.84px;font-size:12.00px;line-height:16px;color:#9d9d9d;transform:scaleX(0.9709);">данные</span>
<span class="t" style="left:1003.00px;top:126.44px;font-size:12.00px;line-height:16px;color:#666;transform:scaleX(0.9618);">Данные</span>
<div class="r" style="left:1112px;top:67px;width:7px;height:18px;background:#b7b4b7;"></div>
<div class="r" style="left:1120px;top:59px;width:7px;height:26px;background:#dddbdd;"></div>
<div class="r" style="left:1128px;top:64px;width:7px;height:21px;background:#b7b4b7;"></div>
<span class="t" style="left:1086.40px;top:90.84px;font-size:12.00px;line-height:16px;color:#9d9d9d;transform:scaleX(0.9874);">Изменить тип</span>
<span class="t" style="left:1092.00px;top:106.84px;font-size:12.00px;line-height:16px;color:#9d9d9d;transform:scaleX(1.0059);">диаграммы</span>
<span class="t" style="left:1115.00px;top:126.44px;font-size:12.00px;line-height:16px;color:#666;transform:scaleX(0.9198);">Тип</span>
<svg style="left:1198px;top:59px" width="28" height="25" viewBox="0 0 28 25">
<path d="M0.5 0.5H27.5V20.5H17.5L14 24.5H0.5Z" fill="#f4f0f4" stroke="#c4bfc4"/>
<path d="M10.5 24.5 L12 21.5 H17.5" fill="none" stroke="#c4bfc4"/>
<rect x="5.5" y="8.5" width="4" height="8" fill="#fff" stroke="#bdb8bd"/><rect x="9.5" y="3.5" width="4" height="13" fill="#e4e0e4" stroke="#bdb8bd"/><rect x="15.5" y="7.5" width="4" height="9" fill="#fff" stroke="#bdb8bd"/><rect x="19.5" y="10.5" width="4" height="6" fill="#e4e0e4" stroke="#bdb8bd"/>
</svg>
<span class="t" style="left:1176.50px;top:90.84px;font-size:12.00px;line-height:16px;color:#9d9d9d;transform:scaleX(0.9725);">Переместить</span>
<span class="t" style="left:1182.50px;top:106.84px;font-size:12.00px;line-height:16px;color:#9d9d9d;transform:scaleX(0.9878);">диаграмму</span>
<span class="t" style="left:1174.00px;top:126.44px;font-size:12.00px;line-height:16px;color:#666;transform:scaleX(0.9501);">Расположение</span>
<svg style="left:1346px;top:130px" width="12" height="8"><path d="M1.5 6 L5.5 2 L9.5 6" fill="none" stroke="#666" stroke-width="1.6"/></svg>
<div class="r" style="left:0px;top:140px;width:1340px;height:2px;background:#fff;"></div>
<div class="r" style="left:5px;top:153px;width:100px;height:24px;border:1px solid #c3c3c3;background:#fff"></div>
<span class="t" style="left:12.70px;top:157.86px;font-size:13.40px;line-height:17px;color:#444;transform:scaleX(0.8640);">D3</span>
<svg style="left:93px;top:163px" width="8" height="5"><path d="M0 0.5h7l-3.5 3.8z" fill="#7d7d7d"/></svg>
<div class="r" style="left:121px;top:161px;width:2px;height:2px;background:#b4b4b4;"></div>
<div class="r" style="left:121px;top:165px;width:2px;height:2px;background:#b4b4b4;"></div>
<div class="r" style="left:121px;top:169px;width:2px;height:2px;background:#b4b4b4;"></div>
<div class="r" style="left:137px;top:153px;width:108px;height:24px;border:1px solid #c3c3c3;background:#fff"></div>
<svg style="left:150px;top:160px" width="12" height="12"><path d="M1.5 1.5 L10.5 10.5 M10.5 1.5 L1.5 10.5" stroke="#c8c8c8" stroke-width="1.5"/></svg>
<svg style="left:185px;top:160px" width="14" height="12"><path d="M1.5 6.5 L5 10 L12.5 1.5" fill="none" stroke="#c8c8c8" stroke-width="1.8"/></svg>
<span class="t" style="left:222.5px;top:157px;font-family:'Liberation Serif',serif;font-style:italic;font-size:15px;line-height:18px;color:#777;font-weight:bold;">f</span>
<span class="t" style="left:227.5px;top:161.5px;font-family:'Liberation Serif',serif;font-style:italic;font-size:10px;line-height:12px;color:#777;font-weight:bold;">x</span>
<div class="r" style="left:250px;top:153px;width:1109px;height:24px;border:1px solid #c3c3c3;background:#fff"></div>
<span class="t" style="left:262.80px;top:157.66px;font-size:13.40px;line-height:17px;color:#222;transform:scaleX(0.8657);">x</span>
<svg style="left:1348px;top:162px" width="10" height="8"><path d="M1 1.2 L4.5 5 L8 1.2" fill="none" stroke="#bdbdbd" stroke-width="2"/></svg>
<div class="r" style="left:552px;top:272px;width:479px;height:287px;border:1px solid #d9d9d9;background:#fff"></div>
<svg style="left:0;top:0" width="1366" height="728"><path d="M574.5 321.5H1011.0M574.5 354.5H1011.0M574.5 386.5H1011.0M574.5 418.5H1011.0M574.5 450.5H1011.0M574.5 483.5H1011.0M574.5 515.5H1011.0M574.5 321.5V515.5M647.5 321.5V515.5M720.5 321.5V515.5M793.5 321.5V515.5M865.5 321.5V515.5M938.5 321.5V515.5M1011.5 321.5V515.5" stroke="#d9d9d9" stroke-width="1" fill="none"/><path d="M574.5 483.5H1011.0 M793.5 321.5V515.5" stroke="#bfbfbf" stroke-width="1" fill="none"/><path d="M647.20 418.53C654.48 424.03 676.30 442.46 690.85 451.51C705.40 460.57 724.80 468.54 734.50 472.85C744.20 477.16 744.20 476.09 749.05 477.38C753.90 478.67 758.75 479.75 763.60 480.61C768.45 481.48 773.30 482.12 778.15 482.55C783.00 482.98 787.85 483.20 792.70 483.20C797.55 483.20 802.40 482.98 807.25 482.55C812.10 482.12 816.95 481.48 821.80 480.61C826.65 479.75 831.50 478.67 836.35 477.38C841.20 476.09 841.20 477.16 850.90 472.85C860.60 468.54 880.00 460.57 894.55 451.51C909.10 442.46 930.93 424.03 938.20 418.53" stroke="#5b9bd5" stroke-width="2" fill="none" stroke-linecap="round"/><path d="M647.20 467.03C654.48 469.30 676.30 478.03 690.85 480.61C705.40 483.20 724.80 482.55 734.50 482.55C744.20 482.55 744.20 481.48 749.05 480.61C753.90 479.75 758.75 478.67 763.60 477.38C768.45 476.09 773.30 474.58 778.15 472.85C783.00 471.13 787.85 469.19 792.70 467.03C797.55 464.88 802.40 462.51 807.25 459.92C812.10 457.33 816.95 454.53 821.80 451.51C826.65 448.49 831.50 445.26 836.35 441.81C841.20 438.36 841.20 439.44 850.90 430.82C860.60 422.19 880.00 405.60 894.55 390.08C909.10 374.55 930.93 346.42 938.20 337.69" stroke="#a5a5a5" stroke-width="2" fill="none" stroke-linecap="round"/><path d="M647.20 486.43C654.48 486.27 676.30 485.79 690.85 485.46C705.40 485.14 724.80 484.71 734.50 484.49C744.20 484.28 744.20 484.28 749.05 484.17C753.90 484.06 758.75 483.95 763.60 483.85C768.45 483.74 773.30 483.63 778.15 483.52C783.00 483.42 787.85 483.31 792.70 483.20C797.55 483.09 802.40 482.98 807.25 482.88C812.10 482.77 816.95 482.66 821.80 482.55C826.65 482.45 831.50 482.34 836.35 482.23C841.20 482.12 841.20 482.12 850.90 481.91C860.60 481.69 880.00 481.26 894.55 480.94C909.10 480.61 930.93 480.13 938.20 479.97" stroke="#ed7d31" stroke-width="2" fill="none" stroke-linecap="round"/><path d="M736 541H762" stroke="#5b9bd5" stroke-width="2"/><path d="M778.5 541H805" stroke="#ed7d31" stroke-width="2"/><path d="M819 541H845.5" stroke="#a5a5a5" stroke-width="2"/></svg>
<span class="t" style="left:566.36px;top:490.92px;font-size:11.20px;line-height:15px;color:#595959;transform:scaleX(1.0000);">-15</span>
<span class="t" style="left:639.11px;top:490.92px;font-size:11.20px;line-height:15px;color:#595959;transform:scaleX(1.0000);">-10</span>
<span class="t" style="left:714.97px;top:490.92px;font-size:11.20px;line-height:15px;color:#595959;transform:scaleX(1.0000);">-5</span>
<span class="t" style="left:789.59px;top:490.92px;font-size:11.20px;line-height:15px;color:#595959;transform:scaleX(1.0000);">0</span>
<span class="t" style="left:862.34px;top:490.92px;font-size:11.20px;line-height:15px;color:#595959;transform:scaleX(1.0000);">5</span>
<span class="t" style="left:931.97px;top:490.92px;font-size:11.20px;line-height:15px;color:#595959;transform:scaleX(1.0000);">10</span>
<span class="t" style="left:1004.72px;top:490.92px;font-size:11.20px;line-height:15px;color:#595959;transform:scaleX(1.0000);">15</span>
<span class="t" style="left:766.31px;top:507.75px;font-size:11.20px;line-height:15px;color:#595959;transform:scaleX(1.0000);">-50</span>
<span class="t" style="left:776.27px;top:475.42px;font-size:11.20px;line-height:15px;color:#595959;transform:scaleX(1.0000);">0</span>
<span class="t" style="left:770.04px;top:443.08px;font-size:11.20px;line-height:15px;color:#595959;transform:scaleX(1.0000);">50</span>
<span class="t" style="left:763.81px;top:410.75px;font-size:11.20px;line-height:15px;color:#595959;transform:scaleX(1.0000);">100</span>
<span class="t" style="left:764.60px;top:533.12px;font-size:11.20px;line-height:15px;color:#595959;transform:scaleX(0.9643);">y</span>
<span class="t" style="left:808.30px;top:533.12px;font-size:11.20px;line-height:15px;color:#595959;transform:scaleX(0.8036);">z</span>
<span class="t" style="left:850.60px;top:533.12px;font-size:11.20px;line-height:15px;color:#595959;transform:scaleX(1.0448);">j</span>
<span class="t" style="left:706.60px;top:284.05px;font-size:16.60px;line-height:22px;color:#595959;transform:scaleX(0.7674);">Н</span>
<div class="r" style="left:715px;top:221px;width:344px;height:196px;border:1px solid #2e343b;border-radius:7px;
background:linear-gradient(90deg,#bfd6ee 0%,#d3e3f4 10%,#cfe0f2 35%,#d9e7f5 55%,#c6daef 78%,#d0e1f3 96%,#bfd6ee 100%);
box-shadow:0 0 0 1px rgba(255,255,255,0.6) inset, 0 0 3px rgba(0,0,0,0.18);"></div>
<div class="r" style="left:717px;top:223px;width:342px;height:27px;border-radius:6px 6px 0 0;background:linear-gradient(180deg,rgba(255,255,255,0.45),rgba(255,255,255,0.05) 60%,rgba(255,255,255,0.15));"></div>
<div class="r" style="left:716px;top:287px;width:6px;height:20px;background:rgba(80,80,90,0.35);filter:blur(2px);"></div>
<div class="r" style="left:772px;top:412px;width:30px;height:4px;background:rgba(80,80,90,0.3);filter:blur(2px);"></div>
<div class="r" style="left:912px;top:412px;width:26px;height:4px;background:rgba(80,100,140,0.3);filter:blur(2px);"></div>
<div class="r" style="left:1055px;top:320px;width:4px;height:60px;background:rgba(120,140,170,0.25);filter:blur(2px);"></div>
<div class="r" style="left:722px;top:250px;width:330px;height:160px;border:1px solid #6f7a87;background:#f0f0f0;box-shadow:0 0 0 1px rgba(255,255,255,0.6)"></div>
<span class="t" style="left:723.70px;top:228.34px;font-size:12.00px;line-height:16px;color:#000;transform:scaleX(0.9881);text-shadow:0 0 6px #fff,0 0 6px #fff,0 0 3px #fff;">Изменение ряда</span>
<svg style="left:978px;top:221px" width="77" height="21" viewBox="0 0 77 21">
<defs>
<linearGradient id="hb" x1="0" y1="0" x2="0" y2="1"><stop offset="0" stop-color="#e4ecf6"/><stop offset="0.48" stop-color="#d5e0ee"/><stop offset="0.5" stop-color="#b7c6d9"/><stop offset="1" stop-color="#c8d6e8"/></linearGradient>
<linearGradient id="cb" x1="0" y1="0" x2="0" y2="1"><stop offset="0" stop-color="#ecb3a6"/><stop offset="0.46" stop-color="#dc8a78"/><stop offset="0.5" stop-color="#c5432a"/><stop offset="0.85" stop-color="#d0583c"/><stop offset="1" stop-color="#e08a62"/></linearGradient>
</defs>
<path d="M0.5 0.5 H28.5 V19.5 H5 Q0.5 19.5 0.5 15 Z" fill="url(#hb)" stroke="#48525e"/>
<path d="M28.5 0.5 H75.5 V15 Q75.5 19.5 71 19.5 H28.5 Z" fill="url(#cb)" stroke="#48525e"/>
<path d="M1.5 1.5 H27.5 M29.5 1.5 H74.5" stroke="rgba(255,255,255,0.6)" fill="none"/>
<path d="M48.2 5.5 L51 5.5 L52.6 8 L54.2 5.5 L57 5.5 L54.2 9.8 L57.2 14.3 L54.3 14.3 L52.6 11.6 L50.9 14.3 L48 14.3 L51 9.8 Z" fill="#fff" stroke="#5a3a3a" stroke-width="0.9" stroke-linejoin="round"/>
<path d="M12.3 7.4 C12.3 3.6 18.3 3.6 18.3 7 C18.3 9.3 15.4 9.2 15.4 11.8" fill="none" stroke="#47505c" stroke-width="3" stroke-linecap="round"/>
<circle cx="15.4" cy="14.6" r="1.7" fill="#47505c"/>
<path d="M12.3 7.4 C12.3 3.6 18.3 3.6 18.3 7 C18.3 9.3 15.4 9.2 15.4 11.8" fill="none" stroke="#fff" stroke-width="1.4" stroke-linecap="round"/>
<circle cx="15.4" cy="14.6" r="0.9" fill="#fff"/>
</svg>
<span class="t" style="left:730.30px;top:257.44px;font-size:12.00px;line-height:16px;color:#000;transform:scaleX(0.9110);">Имя ряда:</span>
<div class="r" style="left:730.3px;top:271px;width:7.85701px;height:1px;background:#000;"></div>
<div class="r" style="left:729px;top:274px;width:178px;height:19px;border:1px solid #abadb3;border-top-color:#8e9096;background:#fff"></div>
<span class="t" style="left:733.60px;top:277.34px;font-size:12.00px;line-height:16px;color:#000;transform:scaleX(0.9195);">=Лист1!$D$2</span>
<svg style="left:907px;top:274px" width="22" height="21" viewBox="0 0 22 21">
<rect x="0.6" y="0.6" width="20.8" height="19.8" rx="3" fill="#f4f4f4" stroke="#6e6e6e" stroke-width="1.2"/>
<rect x="1.5" y="1.5" width="19" height="18" rx="2" fill="none" stroke="#fdfdfd"/>
<rect x="3" y="4" width="15" height="13" fill="#dfe9f7"/>
<rect x="3" y="4" width="15" height="2.2" fill="#4268b0"/>
<path d="M3 9.5H18M3 13.5H18" stroke="#6d8fcb" stroke-width="1"/>
<path d="M3 16.5H18" stroke="#4268b0" stroke-width="1.2"/>
<path d="M3.5 4V17M8.5 6V17M13.5 6V17M17.5 4V17" stroke="#5b82c6" stroke-width="1"/>
<rect x="4.2" y="6.8" width="3.6" height="2" fill="#fff"/><rect x="4.2" y="10.5" width="3.6" height="2.4" fill="#fff"/><rect x="14.2" y="6.8" width="3" height="2" fill="#fff"/>
<path d="M8 6.2 L13.2 7.4 L11.8 8.8 L14.6 11.8 L12.8 13.6 L9.9 10.6 L8.6 12 Z" fill="#d3301c" stroke="#f6d9c8" stroke-width="0.5"/>
</svg>
<span class="t" style="left:939.80px;top:277.34px;font-size:12.00px;line-height:16px;color:#000;transform:scaleX(0.9763);">= j</span>
<span class="t" style="left:730.30px;top:297.44px;font-size:12.00px;line-height:16px;color:#000;transform:scaleX(0.9334);">Значения X:</span>
<div class="r" style="left:782.917px;top:311px;width:7.47102px;height:1px;background:#000;"></div>
<div class="r" style="left:729px;top:314px;width:178px;height:19px;border:1px solid #abadb3;border-top-color:#8e9096;background:#fff"></div>
<span class="t" style="left:733.60px;top:317.34px;font-size:12.00px;line-height:16px;color:#000;transform:scaleX(0.9198);">=Лист1!$A$3:$A$15</span>
<svg style="left:907px;top:314px" width="22" height="21" viewBox="0 0 22 21">
<rect x="0.6" y="0.6" width="20.8" height="19.8" rx="3" fill="#f4f4f4" stroke="#6e6e6e" stroke-width="1.2"/>
<rect x="1.5" y="1.5" width="19" height="18" rx="2" fill="none" stroke="#fdfdfd"/>
<rect x="3" y="4" width="15" height="13" fill="#dfe9f7"/>
<rect x="3" y="4" width="15" height="2.2" fill="#4268b0"/>
<path d="M3 9.5H18M3 13.5H18" stroke="#6d8fcb" stroke-width="1"/>
<path d="M3 16.5H18" stroke="#4268b0" stroke-width="1.2"/>
<path d="M3.5 4V17M8.5 6V17M13.5 6V17M17.5 4V17" stroke="#5b82c6" stroke-width="1"/>
<rect x="4.2" y="6.8" width="3.6" height="2" fill="#fff"/><rect x="4.2" y="10.5" width="3.6" height="2.4" fill="#fff"/><rect x="14.2" y="6.8" width="3" height="2" fill="#fff"/>
<path d="M8 6.2 L13.2 7.4 L11.8 8.8 L14.6 11.8 L12.8 13.6 L9.9 10.6 L8.6 12 Z" fill="#d3301c" stroke="#f6d9c8" stroke-width="0.5"/>
</svg>
<span class="t" style="left:939.80px;top:317.34px;font-size:12.00px;line-height:16px;color:#000;transform:scaleX(0.9358);">= -10; -7; -4; -...</span>
<span class="t" style="left:730.30px;top:337.44px;font-size:12.00px;line-height:16px;color:#000;transform:scaleX(0.9426);">Значения Y:</span>
<div class="r" style="left:783.437px;top:351px;width:7.54477px;height:1px;background:#000;"></div>
<div class="r" style="left:729px;top:354px;width:178px;height:19px;border:1px solid #abadb3;border-top-color:#8e9096;background:#fff"></div>
<span class="t" style="left:733.60px;top:357.34px;font-size:12.00px;line-height:16px;color:#000;transform:scaleX(0.9115);">=Лист1!$D$3:$D$15</span>
<svg style="left:907px;top:354px" width="22" height="21" viewBox="0 0 22 21">
<rect x="0.6" y="0.6" width="20.8" height="19.8" rx="3" fill="#f4f4f4" stroke="#6e6e6e" stroke-width="1.2"/>
<rect x="1.5" y="1.5" width="19" height="18" rx="2" fill="none" stroke="#fdfdfd"/>
<rect x="3" y="4" width="15" height="13" fill="#dfe9f7"/>
<rect x="3" y="4" width="15" height="2.2" fill="#4268b0"/>
<path d="M3 9.5H18M3 13.5H18" stroke="#6d8fcb" stroke-width="1"/>
<path d="M3 16.5H18" stroke="#4268b0" stroke-width="1.2"/>
<path d="M3.5 4V17M8.5 6V17M13.5 6V17M17.5 4V17" stroke="#5b82c6" stroke-width="1"/>
<rect x="4.2" y="6.8" width="3.6" height="2" fill="#fff"/><rect x="4.2" y="10.5" width="3.6" height="2.4" fill="#fff"/><rect x="14.2" y="6.8" width="3" height="2" fill="#fff"/>
<path d="M8 6.2 L13.2 7.4 L11.8 8.8 L14.6 11.8 L12.8 13.6 L9.9 10.6 L8.6 12 Z" fill="#d3301c" stroke="#f6d9c8" stroke-width="0.5"/>
</svg>
<span class="t" style="left:939.80px;top:357.34px;font-size:12.00px;line-height:16px;color:#000;transform:scaleX(0.9029);">= 25; 4; 1; 4; 9...</span>
<div class="r" style="left:889px;top:382px;width:71px;height:19px;border:1px solid #3c7fb1;border-radius:3px;
background:linear-gradient(180deg,#f2f2f2 0%,#ebebeb 48%,#dddddd 52%,#cfcfcf 100%);box-shadow:0 0 0 1px #46d8fb inset, 0 0 0 2px rgba(255,255,255,0.6) inset;"></div>
<span class="t" style="left:918.70px;top:385.24px;font-size:12.00px;line-height:16px;color:#000;transform:scaleX(0.8248);">OK</span>
<div class="r" style="left:973px;top:382px;width:71px;height:19px;border:1px solid #707070;border-radius:3px;
background:linear-gradient(180deg,#f2f2f2 0%,#ebebeb 48%,#dddddd 52%,#cfcfcf 100%);box-shadow:0 0 0 1px #fcfcfc inset;"></div>
<span class="t" style="left:990.00px;top:385.24px;font-size:12.00px;line-height:16px;color:#000;transform:scaleX(0.9174);">Отмена</span>
<svg style="left:76px;top:710px" width="14" height="14" viewBox="0 0 14 14">
<path d="M6 1.5 H12.5 V12.5 H1.5 V6.5" fill="none" stroke="#e6f3ea" stroke-width="1.3"/>
<rect x="6.5" y="1.5" width="6" height="2.4" fill="#e6f3ea"/>
<circle cx="2.9" cy="3" r="2.9" fill="#cfe6d6"/>
<path d="M3.6 6.6H5.4M6.4 6.6H8.2M9.2 6.6H11M3.6 8.8H5.4M6.4 8.8H8.2M9.2 8.8H11M3.6 11H5.4M6.4 11H8.2M9.2 11H11" stroke="#e6f3ea" stroke-width="1.2"/>
</svg>
<svg style="left:1086px;top:710px" width="13" height="13" viewBox="0 0 14 14">
<path d="M0.7 0.7H13.3V13.3H0.7Z M0.7 5H13.3 M0.7 9.2H13.3 M5 0.7V13.3 M9.2 0.7V13.3" fill="none" stroke="#eaf5ee" stroke-width="1.2"/></svg>
<svg style="left:1124px;top:710px" width="13" height="13" viewBox="0 0 14 14">
<rect x="0.7" y="0.7" width="12.6" height="12.6" fill="none" stroke="#eaf5ee" stroke-width="1.2"/>
<rect x="3.5" y="3.5" width="7" height="7.5" fill="none" stroke="#eaf5ee" stroke-width="1"/>
<path d="M5 5.8H9M5 7.4H9M5 9H9" stroke="#eaf5ee" stroke-width="0.9"/></svg>
<svg style="left:1162px;top:710px" width="13" height="13" viewBox="0 0 14 14">
<rect x="0.7" y="0.7" width="12.6" height="12.6" fill="none" stroke="#eaf5ee" stroke-width="1.2"/>
<rect x="1" y="1" width="3.6" height="7" fill="#eaf5ee"/><rect x="5.6" y="1" width="3" height="7" fill="#eaf5ee"/></svg>
<div class="r" style="left:1193px;top:715px;width:6px;height:2px;background:#15552f;"></div>
<div class="r" style="left:1203px;top:716px;width:100px;height:1px;background:#f2f9f4;"></div>
<div class="r" style="left:1253px;top:713px;width:1.5px;height:7px;background:#f2f9f4;"></div>
<div class="r" style="left:1307px;top:715px;width:8px;height:2px;background:#15552f;"></div>
<div class="r" style="left:1310px;top:712px;width:2px;height:8px;background:#15552f;"></div>
<span class="t" style="left:1330.00px;top:708.84px;font-size:12.00px;line-height:16px;color:#bfe0c9;transform:scaleX(0.8797);">100%</span>
</body></html>
